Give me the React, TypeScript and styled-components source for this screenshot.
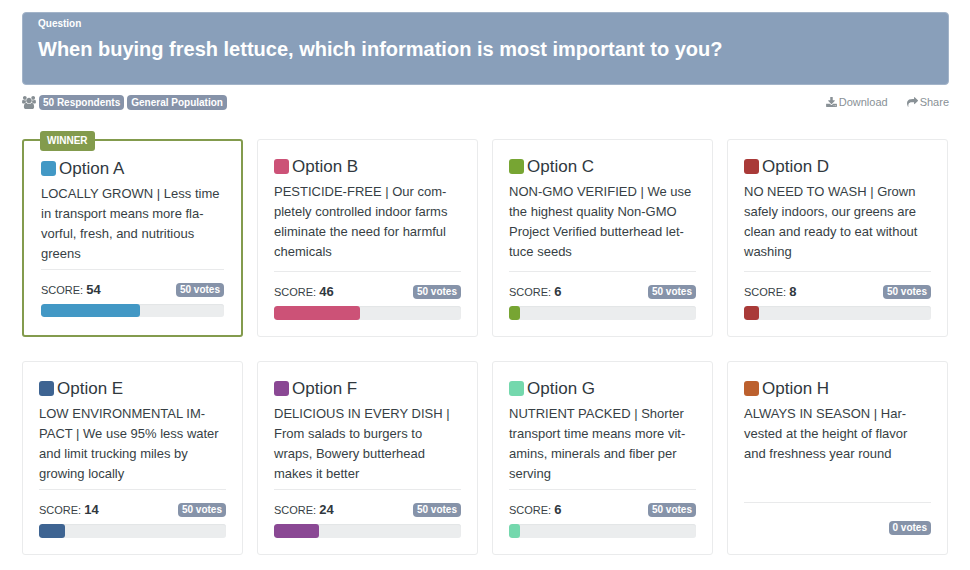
import React from "react";
import styled, { createGlobalStyle } from "styled-components";

const GlobalStyle = createGlobalStyle`
  * { box-sizing: border-box; }
  body {
    margin: 0;
    background: #fff;
    color: #373f45;
    font-family: "Liberation Sans", Arial, sans-serif;
    font-size: 13px;
    line-height: 20px;
  }
`;

const Page = styled.main`
  padding: 12px 21px 15px 22px;
`;

const Banner = styled.header`
  min-height: 73px;
  padding: 4px 15px;
  border: 1px solid #a3b4c9;
  border-radius: 4px;
  background: #899fba;
  color: #fff;
`;

const Eyebrow = styled.p`
  margin: 0;
  font-size: 10px;
  font-weight: 700;
  line-height: 14px;
`;

const Heading = styled.h1`
  margin: 6px 0 0;
  font-size: 20px;
  font-weight: 700;
  line-height: 24px;
`;

const MetaBar = styled.div`
  display: flex;
  align-items: center;
  justify-content: space-between;
  height: 20px;
  margin-top: 7px;
`;

const Tags = styled.div`
  display: flex;
  align-items: center;
  gap: 3px;
  color: #868e93;
`;

const Badge = styled.span`
  padding: 0 4px;
  border-radius: 4px;
  background: #8693a9;
  color: #fff;
  font-size: 10px;
  font-weight: 700;
  line-height: 14px;
`;

const Tag = styled(Badge)`
  line-height: 15px;
`;

const Actions = styled.nav`
  display: flex;
  gap: 19px;
`;

const ActionLink = styled.a`
  display: flex;
  align-items: center;
  gap: 2px;
  color: #899196;
  font-size: 11px;
  text-decoration: none;
`;

const Icon = styled.svg<{ $width: number }>`
  display: block;
  width: ${(p) => p.$width}px;
  height: ${(p) => p.$width - 1}px;
  fill: currentColor;
`;

const Grid = styled.section`
  display: grid;
  grid-template-columns: repeat(4, minmax(0, 1fr));
  gap: 24px 14px;
  margin: 27px 1px 0 0;
`;

const Card = styled.article<{ $winner?: boolean }>`
  position: relative;
  display: flex;
  flex-direction: column;
  padding: ${(p) => (p.$winner ? "17px 17px 18px" : "16px")};
  border: ${(p) => (p.$winner ? "2px solid #839b4d" : "1px solid #eaebec")};
  border-radius: 3px;
`;

const Ribbon = styled.span`
  position: absolute;
  top: -10px;
  left: 16px;
  padding: 0 7px;
  border-radius: 3px;
  background: #839b4d;
  color: #fff;
  font-size: 10px;
  font-weight: 700;
  line-height: 20px;
`;

const Title = styled.h2`
  display: flex;
  align-items: center;
  gap: 3px;
  margin: 0;
  color: #30383e;
  font-size: 17px;
  font-weight: 400;
  line-height: 22px;
`;

const Swatch = styled.span<{ $color: string }>`
  width: 15px;
  height: 15px;
  margin-bottom: 1px;
  border-radius: 3px;
  background: ${(p) => p.$color};
`;

const Description = styled.p`
  margin: 4px 0 5px;
  hyphens: manual;
`;

const Footer = styled.div<{ $empty?: boolean }>`
  margin-top: auto;
  padding-top: ${(p) => (p.$empty ? "15px" : "10px")};
  border-top: 1px solid #e9eaeb;
`;

const ScoreRow = styled.div`
  display: flex;
  align-items: center;
  justify-content: space-between;
  height: 20px;
`;

const Score = styled.span`
  font-size: 11px;
`;

const ScoreValue = styled.strong`
  color: #30383e;
  font-size: 13px;
`;

const Votes = styled(Badge)`
  margin-left: auto;
`;

const Track = styled.div<{ $winner?: boolean }>`
  height: ${(p) => (p.$winner ? 13 : 14)}px;
  margin-top: 4px;
  border-radius: 3px;
  background: #ebedee;
  box-shadow: inset 0 1px 1px #e3e5e6;
  overflow: hidden;
`;

const Fill = styled.div<{ $color: string }>`
  height: 100%;
  border-radius: 3px;
  background: ${(p) => p.$color};
`;

type Option = {
  letter: string;
  color: string;
  text: string;
  votes: number;
  score?: number;
  winner?: boolean;
};

const options: Option[] = [
  { letter: "A", color: "#4298c5", text: "LOCALLY GROWN | Less time in transport means more fla\u00ADvorful, fresh, and nutritious greens", votes: 50, score: 54, winner: true },
  { letter: "B", color: "#cc5277", text: "PESTICIDE-FREE | Our com\u00ADpletely controlled indoor farms eliminate the need for harmful chemicals", votes: 50, score: 46 },
  { letter: "C", color: "#77a533", text: "NON-GMO VERIFIED | We use the highest quality Non-GMO Project Verified butterhead let\u00ADtuce seeds", votes: 50, score: 6 },
  { letter: "D", color: "#a93a38", text: "NO NEED TO WASH | Grown safely indoors, our greens are clean and ready to eat without washing", votes: 50, score: 8 },
  { letter: "E", color: "#3e6492", text: "LOW ENVIRONMENTAL IM\u00ADPACT | We use 95% less water and limit trucking miles by growing locally", votes: 50, score: 14 },
  { letter: "F", color: "#8a4894", text: "DELICIOUS IN EVERY DISH | From salads to burgers to wraps, Bowery butterhead makes it better", votes: 50, score: 24 },
  { letter: "G", color: "#74d8ad", text: "NUTRIENT PACKED | Shorter transport time means more vit\u00ADamins, minerals and fiber per serving", votes: 50, score: 6 },
  { letter: "H", color: "#bc602e", text: "ALWAYS IN SEASON | Har\u00ADvested at the height of flavor and freshness year round", votes: 0 },
];

function UsersIcon() {
  return (
    <Icon $width={14} viewBox="0 0 1920 1792" aria-hidden="true">
      <path d="M593 896q-162 5-265 128h-134q-82 0-138-40.5t-56-118.5q0-353 124-353 6 0 43.5 21t97.5 42.5 119 21.5q67 0 133-23-5 37-5 66 0 139 81 256zm1071 637q0 120-73 189.5t-194 69.5h-874q-121 0-194-69.5t-73-189.5q0-53 3.5-103.5t14-109 26.5-108.5 43-97.5 62-81 85.5-53.5 111.5-20q10 0 43 21.5t73 48 107 48 135 21.5 135-21.5 107-48 73-48 43-21.5q61 0 111.5 20t85.5 53.5 62 81 43 97.5 26.5 108.5 14 109 3.5 103.5zm-1024-1277q0 106-75 181t-181 75-181-75-75-181 75-181 181-75 181 75 75 181zm704 384q0 159-112.5 271.5t-271.5 112.5-271.5-112.5-112.5-271.5 112.5-271.5 271.5-112.5 271.5 112.5 112.5 271.5zm576 225q0 78-56 118.5t-138 40.5h-134q-103-123-265-128 81-117 81-256 0-29-5-66 66 23 133 23 59 0 119-21.5t97.5-42.5 43.5-21q124 0 124 353zm-128-609q0 106-75 181t-181 75-181-75-75-181 75-181 181-75 181 75 75 181z" />
    </Icon>
  );
}

function DownloadIcon() {
  return (
    <Icon $width={11} viewBox="64 0 1664 1536" aria-hidden="true">
      <path d="M1344 1344q0-26-19-45t-45-19-45 19-19 45 19 45 45 19 45-19 19-45zm256 0q0-26-19-45t-45-19-45 19-19 45 19 45 45 19 45-19 19-45zm128-224v320q0 40-28 68t-68 28h-1472q-40 0-68-28t-28-68v-320q0-40 28-68t68-28h465l135 136q58 56 136 56t136-56l136-136h464q40 0 68 28t28 68zm-325-569q17 41-14 70l-448 448q-18 19-45 19t-45-19l-448-448q-31-29-14-70 17-39 59-39h256v-448q0-26 19-45t45-19h256q26 0 45 19t19 45v448h256q42 0 59 39z" />
    </Icon>
  );
}

function ShareIcon() {
  return (
    <Icon $width={11} viewBox="0 64 1792 1600" aria-hidden="true">
      <path d="M1792 640q0 26-19 45l-512 512q-19 19-45 19t-45-19-19-45v-256h-224q-98 0-175.5 6t-154 21.5-133 42.5-105.5 69.5-80 101-48.5 138.5-17.5 181q0 55 5 123 0 6 2.5 23.5t2.5 26.5q0 15-8.5 25t-23.5 10q-16 0-28-17-7-9-13-22t-13.5-30-10.5-24q-127-285-127-451 0-199 53-333 162-403 875-403h224v-256q0-26 19-45t45-19 45 19l512 512q19 19 19 45z" />
    </Icon>
  );
}

function OptionCard({ option }: { option: Option }) {
  const { letter, color, text, votes, score, winner } = option;
  return (
    <Card $winner={winner}>
      {winner && <Ribbon>WINNER</Ribbon>}
      <Title>
        <Swatch $color={color} />
        Option {letter}
      </Title>
      <Description>{text}</Description>
      <Footer $empty={score === undefined}>
        <ScoreRow>
          {score !== undefined && (
            <Score>
              SCORE: <ScoreValue>{score}</ScoreValue>
            </Score>
          )}
          <Votes>{votes} votes</Votes>
        </ScoreRow>
        {score !== undefined && (
          <Track
            $winner={winner}
            role="progressbar"
            aria-label={`Option ${letter} score`}
            aria-valuenow={score}
            aria-valuemin={0}
            aria-valuemax={100}
          >
            <Fill $color={color} style={{ width: `${score}%` }} />
          </Track>
        )}
      </Footer>
    </Card>
  );
}

export default function App() {
  return (
    <>
      <GlobalStyle />
      <Page>
        <Banner>
          <Eyebrow>Question</Eyebrow>
          <Heading>When buying fresh lettuce, which information is most important to you?</Heading>
        </Banner>
        <MetaBar>
          <Tags>
            <UsersIcon />
            <Tag>50 Respondents</Tag>
            <Tag>General Population</Tag>
          </Tags>
          <Actions aria-label="Question actions">
            <ActionLink href="#download">
              <DownloadIcon />
              Download
            </ActionLink>
            <ActionLink href="#share">
              <ShareIcon />
              Share
            </ActionLink>
          </Actions>
        </MetaBar>
        <Grid>
          {options.map((option) => (
            <OptionCard key={option.letter} option={option} />
          ))}
        </Grid>
      </Page>
    </>
  );
}
